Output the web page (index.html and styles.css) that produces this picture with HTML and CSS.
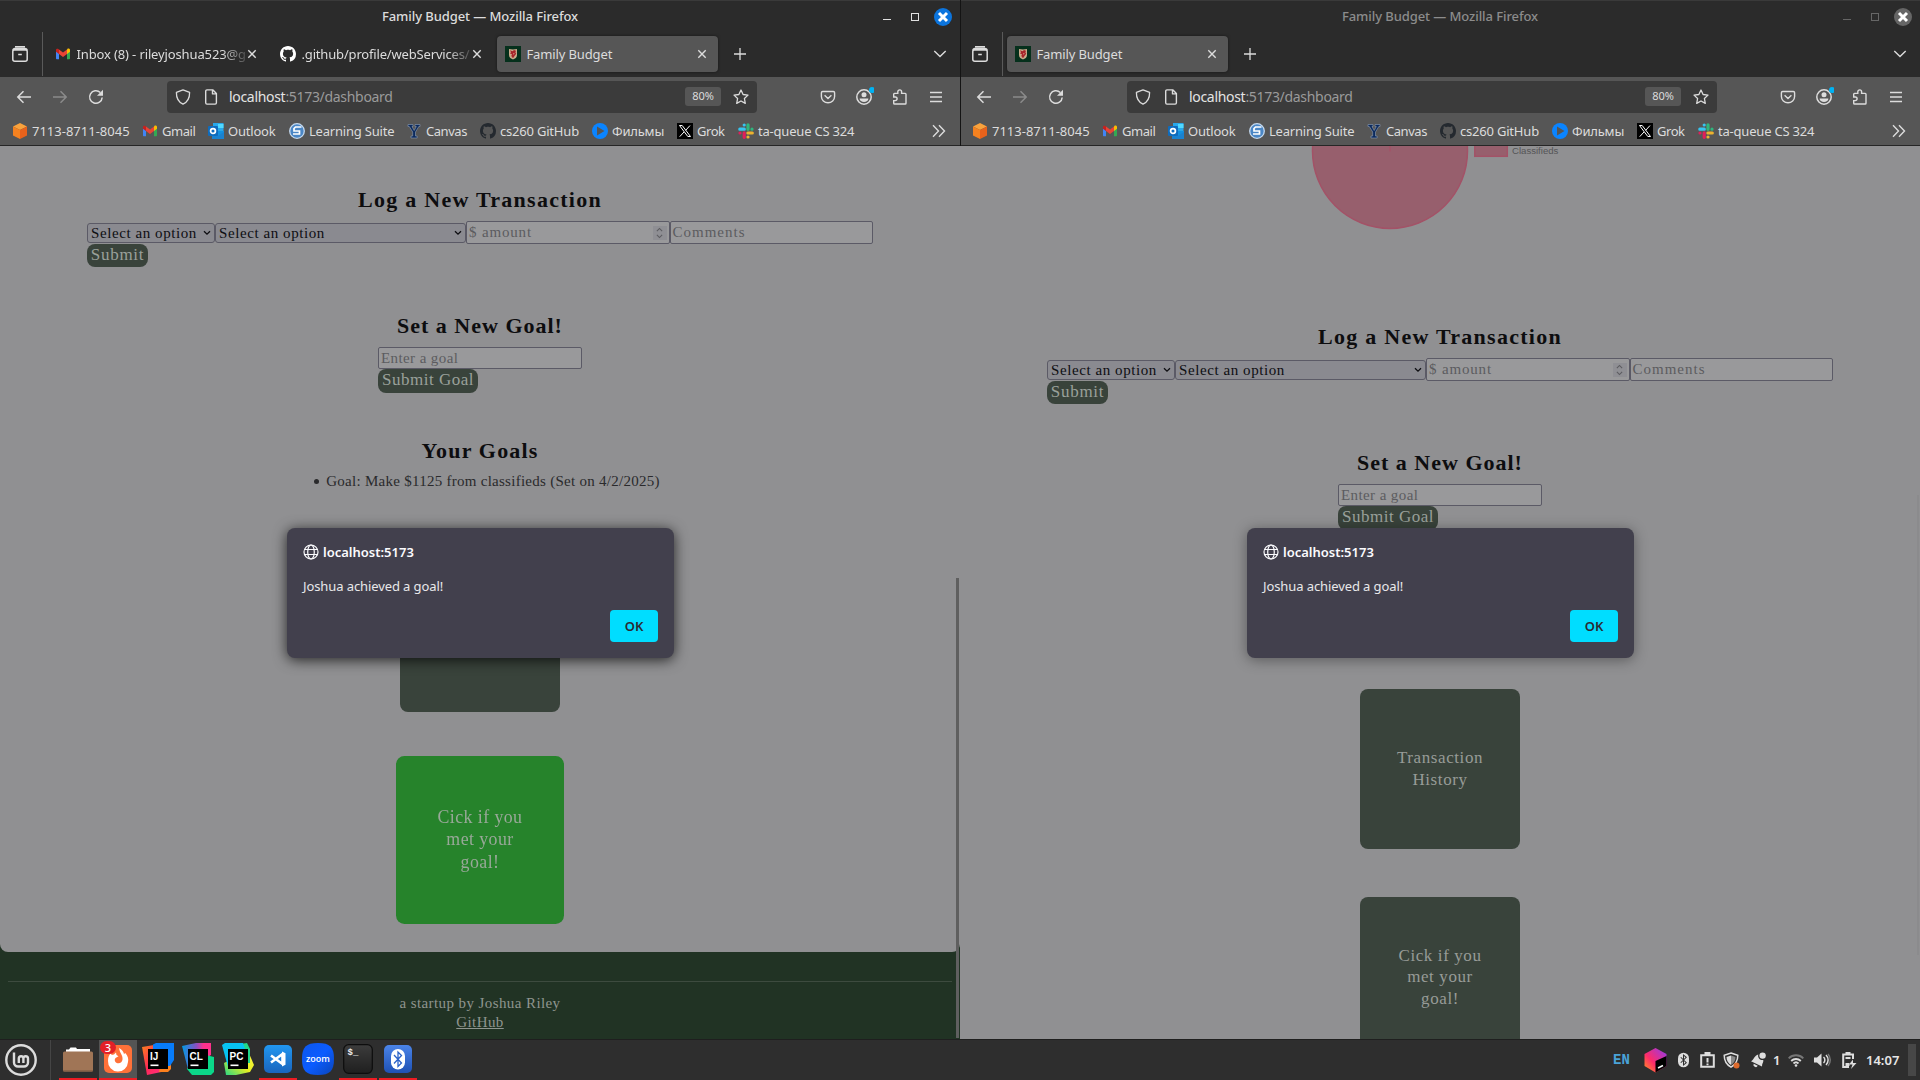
FILE: index.html
```html
<!DOCTYPE html>
<html lang="en">
<head>
<meta charset="utf-8">
<title>Family Budget</title>
<link rel="stylesheet" href="styles.css">
</head>
<body>
<svg class="defs" width="0" height="0" aria-hidden="true">
  <linearGradient id="g-ij" x1="0" y1="0" x2="1" y2="1"><stop offset="0" stop-color="#fc801d"/><stop offset=".5" stop-color="#fe2857"/><stop offset="1" stop-color="#ff318c"/></linearGradient>
  <linearGradient id="g-cl" x1="0" y1="0" x2="1" y2="0"><stop offset="0" stop-color="#009ae5"/><stop offset=".5" stop-color="#8a4fc0"/><stop offset=".75" stop-color="#ff318c"/></linearGradient>
  <linearGradient id="g-pc" x1="0" y1="1" x2="1" y2="0"><stop offset="0" stop-color="#21d789"/><stop offset=".5" stop-color="#e8ee20"/><stop offset="1" stop-color="#fcf84a"/></linearGradient>
  <linearGradient id="g-blue" x1="0" y1="0" x2="0" y2="1"><stop offset="0" stop-color="#2196f0"/><stop offset="1" stop-color="#1a65bd"/></linearGradient>
  <linearGradient id="g-bt" x1="0" y1="0" x2="0" y2="1"><stop offset="0" stop-color="#4b84e8"/><stop offset="1" stop-color="#1e51b4"/></linearGradient>
  <linearGradient id="g-term" x1="0" y1="0" x2="0" y2="1"><stop offset="0" stop-color="#3c3c3c"/><stop offset="1" stop-color="#1f1f1f"/></linearGradient>
  <linearGradient id="g-cube" x1="0" y1="1" x2="1" y2="0"><stop offset="0" stop-color="#ff9a1d"/><stop offset=".4" stop-color="#fe2b6a"/><stop offset="1" stop-color="#8f3bf0"/></linearGradient>
  <linearGradient id="g-zoom" x1="0" y1="0" x2="1" y2="1"><stop offset="0" stop-color="#0d57ee"/><stop offset=".5" stop-color="#0b5cff"/><stop offset="1" stop-color="#0a45b8"/></linearGradient>
  <symbol id="view" viewBox="0 0 16 16"><path d="M3 .8h10M2.2 4h11.6a1.4 1.4 0 0 1 1.4 1.4v7.800a2 2 0 0 1-2 2H2.800a2 2 0 0 1-2-2V5.400A1.400 1.400 0 0 1 2.200 4zM.8 4.500C1 3 2 2.500 3 2.500h10c1 0 2 .5 2.200 2M6.200 8.500h3.600" fill="none" stroke="currentColor" stroke-width="1.500"/></symbol>
  <symbol id="gmail" viewBox="0 0 16 16"><path d="M1 4v8.300c0 .6.4 1 1 1h2V6z" fill="#4285f4"/><path d="M15 4v8.300c0 .6-.4 1-1 1h-2V6z" fill="#34a853"/><path d="M12 3.500V8l3-2.200V4c0-1.500-1.600-1.900-2.500-1.200z" fill="#fbbc04"/><path d="M4 8V3.500l4 3 4-3V8l-4 3z" fill="#ea4335"/><path d="M1 4v1.800L4 8V3.500l-.6-.5C2.500 2.200 1 2.800 1 4z" fill="#c5221f"/></symbol>
  <symbol id="github" viewBox="0 0 16 16"><path fill="currentColor" d="M8 0C3.58 0 0 3.58 0 8c0 3.54 2.29 6.53 5.47 7.59.4.07.55-.17.55-.38 0-.19-.01-.82-.01-1.49-2.01.37-2.53-.49-2.69-.94-.09-.23-.48-.94-.82-1.13-.28-.15-.68-.52-.01-.53.63-.01 1.08.58 1.23.82.72 1.21 1.87.87 2.33.66.07-.52.28-.87.51-1.07-1.78-.2-3.64-.89-3.64-3.95 0-.87.31-1.59.82-2.15-.08-.2-.36-1.02.08-2.12 0 0 .67-.21 2.2.82.64-.18 1.32-.27 2-.27s1.36.09 2 .27c1.53-1.04 2.2-.82 2.2-.82.44 1.1.16 1.92.08 2.12.51.56.82 1.27.82 2.15 0 3.07-1.87 3.75-3.65 3.95.29.25.54.73.54 1.48 0 1.07-.01 1.93-.01 2.2 0 .21.15.46.55.38A8.01 8.01 0 0 0 16 8c0-4.42-3.58-8-8-8z"/></symbol>
  <symbol id="crest" viewBox="0 0 16 16"><path fill="#06301c" d="M0 0h16v16H0z"/><path fill="#c9a98a" d="M4 3l4 .6L12 3v6c0 2.500-2 3.700-4 4.500C6 12.700 4 11.500 4 9z"/><path fill="#a8242a" d="M5 4.200l2.500 1L9 3.900l2 .8-.6 1.800.8 1.300L9.500 10 8 12.200 6.300 10 7 8.200 5 7.500l1-1.200z"/><path fill="#e8d9c0" d="M8.500 7l1 .6-1 1.200z"/></symbol>
  <symbol id="close" viewBox="0 0 16 16"><path d="M4.300 4.300l7.400 7.400M11.700 4.300l-7.400 7.400" stroke="currentColor" stroke-width="1.400" fill="none"/></symbol>
  <symbol id="plus" viewBox="0 0 16 16"><path d="M8 2v12M2 8h12" stroke="currentColor" stroke-width="1.300" fill="none"/></symbol>
  <symbol id="chev" viewBox="0 0 16 16"><path d="M2.300 5l5.700 5.500L13.700 5" stroke="currentColor" stroke-width="1.400" fill="none"/></symbol>
  <symbol id="back" viewBox="0 0 16 16"><path d="M15 8H1.800M7.500 2.300L1.800 8l5.700 5.700" stroke="currentColor" stroke-width="1.500" fill="none"/></symbol>
  <symbol id="fwd" viewBox="0 0 16 16"><path d="M1 8h13.200M8.500 2.300L14.200 8l-5.700 5.700" stroke="currentColor" stroke-width="1.500" fill="none"/></symbol>
  <symbol id="reload" viewBox="0 0 16 16"><path d="M14.200 8.500A6.300 6.300 0 1 1 12.300 3.500" stroke="currentColor" stroke-width="1.500" fill="none"/><path d="M15 .8v6H9z" fill="currentColor"/></symbol>
  <symbol id="shield" viewBox="0 0 16 16"><path d="M8 .9l6.600 2.500c.1 4.800-1.500 9.200-6.600 11.800C2.900 12.600 1.300 8.200 1.400 3.400z" stroke="currentColor" stroke-width="1.300" stroke-linejoin="round" fill="none"/></symbol>
  <symbol id="page" viewBox="0 0 16 16"><path d="M2.700 2.200c0-.8.5-1.300 1.300-1.300h6l3.400 3.500v9.400c0 .8-.5 1.300-1.300 1.300H4c-.8 0-1.300-.5-1.300-1.300zM9.500 1v3.900h3.800" stroke="currentColor" stroke-width="1.400" stroke-linejoin="round" fill="none"/></symbol>
  <symbol id="star" viewBox="0 0 16 16"><path d="M8 1l2.100 4.500 4.900.6-3.600 3.400.9 4.900L8 12l-4.300 2.400.9-4.900L1 6.100l4.900-.6z" stroke="currentColor" stroke-width="1.300" stroke-linejoin="round" fill="none"/></symbol>
  <symbol id="pocket" viewBox="0 0 16 16"><path d="M2.700 2.500h10.600c.7 0 1.300.5 1.300 1.200V7.500a6.600 6.300 0 0 1-13.200 0V3.700c0-.7.6-1.200 1.300-1.200zM4.600 6.300L8 9.500l3.400-3.200" stroke="currentColor" stroke-width="1.400" fill="none"/></symbol>
  <symbol id="account" viewBox="0 0 18 18"><circle cx="8" cy="10" r="7.200" stroke="currentColor" stroke-width="1.500" fill="none"/><circle cx="8" cy="7.800" r="2.500" fill="currentColor"/><path d="M3.600 11.500h8.800c0 2-2 3.500-4.400 3.500s-4.400-1.500-4.400-3.500z" fill="currentColor"/><circle cx="16" cy="3" r="3" fill="#00b3f4"/></symbol>
  <symbol id="ext" viewBox="0 0 16 16"><path d="M1.700 8V5.200c0-.5.300-.8.800-.8h3.300V2.800a1.900 1.900 0 0 1 3.800 0v1.600h3.600c.5 0 .8.300.8.800v9c0 .5-.3.8-.8.8H2.500c-.5 0-.8-.3-.8-.8v-2.600h1.600a1.800 1.800 0 0 0 0-3.600z" stroke="currentColor" stroke-width="1.400" fill="none"/></symbol>
  <symbol id="menu" viewBox="0 0 16 16"><path d="M2 3.500h12M2 8h12M2 12.500h12" stroke="currentColor" stroke-width="1.300"/></symbol>
  <symbol id="more" viewBox="0 0 16 16"><path d="M2 2.300L7.500 8 2 13.700M8 2.300L13.500 8 8 13.700" stroke="currentColor" stroke-width="1.400" fill="none"/></symbol>
  <symbol id="aws" viewBox="0 0 16 16"><path d="M8 0l7 3.500L8 7 1 3.500z" fill="#f9a23c"/><path d="M1 3.500L8 7v9l-7-3.500z" fill="#f58220"/><path d="M15 3.500L8 7v9l7-3.500z" fill="#e8621c"/></symbol>
  <symbol id="outlook" viewBox="0 0 16 16"><path d="M5 0h10.500v8H5z" fill="#28a8ea"/><path d="M10 1h5.500v4H10z" fill="#50d9ff"/><path d="M4 8l12 0v8H4z" fill="#1490df"/><path d="M4 9l6.500 3.500L16 9v7H4z" fill="#1a82d0"/><rect y="3" width="10" height="10" rx="1" fill="#0f6cbd"/><circle cx="5" cy="8" r="2.400" fill="none" stroke="#fff" stroke-width="1.700"/></symbol>
  <symbol id="ls" viewBox="0 0 16 16"><circle cx="8" cy="8" r="7.300" fill="#4a86c5" stroke="#c5d9ee" stroke-width="1.300"/><path d="M12.500 4H6.500L5 5.500V8h5.500v3H4" stroke="#fff" stroke-width="1.700" fill="none"/></symbol>
  <symbol id="byu" viewBox="0 0 16 16"><path d="M2 1.500h5v2H6l2.200 4 2.100-4H9v-2h5v2h-1.200L9.500 9v4h1.700v2H5v-2h1.700V9L3.300 3.500H2z" fill="#0b2a5e" stroke="#8d9db5" stroke-width=".6"/></symbol>
  <symbol id="film" viewBox="0 0 16 16"><circle cx="8" cy="8" r="8" fill="#0a84ff"/><path d="M5 3.500L12.500 8 5 12.500z" fill="#565656"/></symbol>
  <symbol id="x" viewBox="0 0 16 16"><path d="M0 0h16v16H0z"/><path d="M2.500 2.500h2.700l8.300 11h-2.700zM13 2.500L8.700 7.300M7 9l-4.300 4.700" fill="none" stroke="#fff" stroke-width="1"/></symbol>
  <symbol id="slack" viewBox="0 0 16 16"><g fill="none" stroke-width="3.200" stroke-linecap="round"><path d="M6.200 2v0M1.800 6.200h4.500" stroke="#36c5f0"/><path d="M14 6.200v0M10 1.800v4.500" stroke="#2eb67d"/><path d="M10 14v0M9.900 10h4.400" stroke="#ecb22e"/><path d="M2 10v0M6.200 9.900v4.400" stroke="#e01e5a"/></g></symbol>
  <symbol id="globe" viewBox="0 0 16 16"><g fill="none" stroke="currentColor" stroke-width="1.200"><circle cx="8" cy="8" r="7"/><ellipse cx="8" cy="8" rx="3.300" ry="7"/><path d="M1.500 5.500h13M1.500 10.500h13"/></g></symbol>
  <symbol id="caret" viewBox="0 0 8 8"><path d="M1 2.200L4 5.200 7 2.200" stroke="currentColor" stroke-width="1.300" fill="none"/></symbol>
  <symbol id="bt" viewBox="0 0 12 16"><rect width="12" height="16" rx="6" fill="var(--pill)"/><path d="M3 5l6 6-3 2.500v-11L9 5l-6 6" fill="none" stroke="var(--rune)" stroke-width="1.100"/></symbol>
</svg>

<div class="desktop">
  <section class="window">
    <header class="titlebar">
      <span class="wtitle">Family Budget — Mozilla Firefox</span>
      <span class="wmin"></span><span class="wmax"></span>
      <span class="wclose"><svg width="18" height="18"><path d="M5 5l8 8M13 5l-8 8" stroke="#fff" stroke-width="3"/></svg></span>
    </header>
    <nav class="tabs">
      <span class="viewbtn"><svg class="i16"><use href="#view"/></svg></span>
      <div class="tab"><svg class="i16"><use href="#gmail"/></svg><span class="tlabel fade">Inbox (8) - rileyjoshua523@g</span><svg class="i16"><use href="#close"/></svg></div>
      <div class="tab"><svg class="i16 white"><use href="#github"/></svg><span class="tlabel fade gh">.github/profile/webServices/</span><svg class="i16"><use href="#close"/></svg></div>
      <div class="tab active"><svg class="i16"><use href="#crest"/></svg><span class="tlabel">Family Budget</span><svg class="i16"><use href="#close"/></svg></div>
      <svg class="i16 newtab"><use href="#plus"/></svg>
      <svg class="i16 alltabs"><use href="#chev"/></svg>
    </nav>
    <div class="toolbar">
      <svg class="i16"><use href="#back"/></svg><svg class="i16 dim"><use href="#fwd"/></svg><svg class="i16"><use href="#reload"/></svg>
      <div class="urlbar"><svg class="i16"><use href="#shield"/></svg><svg class="i16"><use href="#page"/></svg><span class="url"><b>localhost</b>:5173/dashboard</span><span class="zoomlevel">80%</span><svg class="i16"><use href="#star"/></svg></div>
      <div class="tools"><svg class="i16"><use href="#pocket"/></svg><svg class="acct"><use href="#account"/></svg><svg class="i16"><use href="#ext"/></svg><svg class="i16"><use href="#menu"/></svg></div>
    </div>
    <div class="bookmarks">
      <span class="acctno"><svg class="i16"><use href="#aws"/></svg>7113-8711-8045</span>
      <span class="tight"><svg class="i16"><use href="#gmail"/></svg>Gmail</span>
      <span><svg class="i16"><use href="#outlook"/></svg>Outlook</span>
      <span><svg class="i16"><use href="#ls"/></svg>Learning Suite</span>
      <span class="tight"><svg class="i16"><use href="#byu"/></svg>Canvas</span>
      <span><svg class="i16 ink"><use href="#github"/></svg>cs260 GitHub</span>
      <span><svg class="i16"><use href="#film"/></svg>Фильмы</span>
      <span class="tight"><svg class="i16"><use href="#x"/></svg>Grok</span>
      <span><svg class="i16"><use href="#slack"/></svg>ta-queue CS 324</span>
      <svg class="i16 overflow"><use href="#more"/></svg>
    </div>
    <div class="page">
      <main class="content rounded">
        <h2 class="log-title">Log a New Transaction</h2>
        <div class="form">
          <div class="row">
            <span class="select type">Select an option<svg><use href="#caret"/></svg></span>
            <span class="select category">Select an option<svg><use href="#caret"/></svg></span>
            <span class="field"><em class="amount">$ amount</em><i class="spin"><svg class="up"><use href="#caret"/></svg><svg><use href="#caret"/></svg></i></span>
            <span class="field"><em class="comments">Comments</em></span>
          </div>
          <span class="btn">Submit</span>
        </div>
        <h2 class="goal-title">Set a New Goal!</h2>
        <div class="goalform"><span class="field"><em>Enter a goal</em></span><span class="btn wide">Submit Goal</span></div>
        <h2 class="list-title">Your Goals</h2>
        <ul class="goals"><li>Goal: Make $1125 from classifieds (Set on 4/2/2025)</li></ul>
        <div class="tile">Transaction<br>History</div>
        <div class="tile met">Cick if you<br>met your<br>goal!</div>
      </main>
      <footer class="foot"><hr><p>a startup by Joshua Riley</p><a>GitHub</a></footer>
    </div>
    <i class="scroll"></i>
    <div class="dialog">
      <div class="host"><svg class="i16"><use href="#globe"/></svg>localhost:5173</div>
      <p class="msg">Joshua achieved a goal!</p>
      <span class="ok">OK</span>
    </div>
  </section>

  <section class="window second">
    <header class="titlebar">
      <span class="wtitle">Family Budget — Mozilla Firefox</span>
      <span class="wmin"></span><span class="wmax"></span>
      <span class="wclose"><svg width="18" height="18"><path d="M5 5l8 8M13 5l-8 8" stroke="#fff" stroke-width="3"/></svg></span>
    </header>
    <nav class="tabs">
      <span class="viewbtn"><svg class="i16"><use href="#view"/></svg></span>
      <div class="tab active"><svg class="i16"><use href="#crest"/></svg><span class="tlabel">Family Budget</span><svg class="i16"><use href="#close"/></svg></div>
      <svg class="i16 newtab"><use href="#plus"/></svg>
      <svg class="i16 alltabs"><use href="#chev"/></svg>
    </nav>
    <div class="toolbar">
      <svg class="i16"><use href="#back"/></svg><svg class="i16 dim"><use href="#fwd"/></svg><svg class="i16"><use href="#reload"/></svg>
      <div class="urlbar"><svg class="i16"><use href="#shield"/></svg><svg class="i16"><use href="#page"/></svg><span class="url"><b>localhost</b>:5173/dashboard</span><span class="zoomlevel">80%</span><svg class="i16"><use href="#star"/></svg></div>
      <div class="tools"><svg class="i16"><use href="#pocket"/></svg><svg class="acct"><use href="#account"/></svg><svg class="i16"><use href="#ext"/></svg><svg class="i16"><use href="#menu"/></svg></div>
    </div>
    <div class="bookmarks">
      <span class="acctno"><svg class="i16"><use href="#aws"/></svg>7113-8711-8045</span>
      <span class="tight"><svg class="i16"><use href="#gmail"/></svg>Gmail</span>
      <span><svg class="i16"><use href="#outlook"/></svg>Outlook</span>
      <span><svg class="i16"><use href="#ls"/></svg>Learning Suite</span>
      <span class="tight"><svg class="i16"><use href="#byu"/></svg>Canvas</span>
      <span><svg class="i16 ink"><use href="#github"/></svg>cs260 GitHub</span>
      <span><svg class="i16"><use href="#film"/></svg>Фильмы</span>
      <span class="tight"><svg class="i16"><use href="#x"/></svg>Grok</span>
      <span><svg class="i16"><use href="#slack"/></svg>ta-queue CS 324</span>
      <svg class="i16 overflow"><use href="#more"/></svg>
    </div>
    <div class="page">
      <main class="content">
        <svg class="chart" width="260" height="100" viewBox="0 0 260 100">
          <circle cx="79" cy="5" r="77.500" fill="#975f6d" stroke="#a35267" stroke-width="1.500"/>
          <path d="M79 0v5.500" stroke="#a35267" stroke-width="1.500"/>
          <rect x="163.800" y="-4" width="32.500" height="14.300" fill="#975f6d" stroke="#a35267" stroke-width="1.500"/>
          <text x="201" y="8" class="legend">Classifieds</text>
        </svg>
        <h2 class="log-title">Log a New Transaction</h2>
        <div class="form">
          <div class="row">
            <span class="select type">Select an option<svg><use href="#caret"/></svg></span>
            <span class="select category">Select an option<svg><use href="#caret"/></svg></span>
            <span class="field"><em class="amount">$ amount</em><i class="spin"><svg class="up"><use href="#caret"/></svg><svg><use href="#caret"/></svg></i></span>
            <span class="field"><em class="comments">Comments</em></span>
          </div>
          <span class="btn">Submit</span>
        </div>
        <h2 class="goal-title">Set a New Goal!</h2>
        <div class="goalform"><span class="field"><em>Enter a goal</em></span><span class="btn wide">Submit Goal</span></div>
        <div class="tile first">Transaction<br>History</div>
        <div class="tile">Cick if you<br>met your<br>goal!</div>
      </main>
    </div>
    <i class="scroll"></i>
    <div class="dialog">
      <div class="host"><svg class="i16"><use href="#globe"/></svg>localhost:5173</div>
      <p class="msg">Joshua achieved a goal!</p>
      <span class="ok">OK</span>
    </div>
  </section>

  <div class="taskbar">
    <svg class="mint" width="32" height="32" viewBox="0 0 32 32"><g fill="none" stroke="#dcdcdc"><circle cx="16" cy="16" r="14.700" stroke-width="2.400"/><path d="M9 8.500v10a4 4 0 0 0 4 4h6a4 4 0 0 0 4-4v-4a2.300 2.300 0 0 0-4.600 0v4.500M18.400 18v-3.500a2.300 2.300 0 0 0-4.600 0v4.500" stroke-width="2.400"/></g></svg>
    <div class="apps">
      <span class="app run"><svg width="32" height="32" viewBox="0 0 32 32"><path d="M4 9V6.500h3l1.500-2H14l1 1.500h13V10H4z" fill="#fff"/><rect x="1" y="8.500" width="30" height="20" rx="1.500" fill="#a07556"/><path d="M1 27h30v.5a1 1 0 0 1-1 1H2a1 1 0 0 1-1-1z" fill="#8c6448"/></svg></span>
      <span class="app run focus"><svg width="32" height="32" viewBox="0 0 32 32"><rect x="2" y="2" width="28" height="28" rx="5" fill="#ff7139"/><path d="M17 5c3 1.500 4.500 3.500 5 6l1.300-1C26 13 26.700 16 26 19a10 10 0 0 1-20-1c0-4 1-6 3-8l.6 2 2.400-.4 2-2.200.5 2.700 2 1.200-3 1.700c-1.300 1.200-1 4 1.200 5 3 1 5.500-.5 5.800-3.500C21 12 18 11 17 5z" fill="#fff"/></svg><b class="badge">3</b></span>
      <span class="app"><svg width="32" height="32" viewBox="0 0 32 32"><path d="M0 4l12-2 12 26-19 4z" fill="url(#g-ij)"/><path d="M20 14h9v12l-3 3h-9z" fill="#fc801d"/><path d="M11 1.500L14 0h18v17l-4 6H11z" fill="#087cfa"/><path d="M6 6h20v20H6z"/><text x="8" y="17" class="jb">IJ</text><path d="M8.500 21.500h8v1.600h-8z" fill="#fff"/></svg></span>
      <span class="app"><svg width="32" height="32" viewBox="0 0 32 32"><path d="M0 3l14-3h15v12L6 26z" fill="url(#g-cl)"/><path d="M16 10l16 4v15l-3 3H10l-5-6z" fill="#0bd789"/><path d="M6 6h20v20H6z"/><text x="7.500" y="17" class="jb">CL</text><path d="M8.500 21.500h8v1.600h-8z" fill="#fff"/></svg></span>
      <span class="app"><svg width="32" height="32" viewBox="0 0 32 32"><path d="M2 20L26 8l6 14-4 7-14 3H4z" fill="url(#g-pc)"/><path d="M18 1l7-1 3 6v14H18z" fill="#21d789"/><path d="M0 2l3-2h18l2 6-17 18z" fill="#07c3f2"/><path d="M6 6h20v20H6z"/><text x="7.500" y="17" class="jb">PC</text><path d="M8.500 21.500h8v1.600h-8z" fill="#fff"/></svg></span>
      <span class="app run"><svg width="32" height="32" viewBox="0 0 32 32"><rect x="2" y="2" width="28" height="28" rx="5" fill="url(#g-blue)"/><path d="M9 12.500l11.500 8.500V11L9 19.500" fill="none" stroke="#fff" stroke-width="2.600" stroke-linejoin="round"/><path d="M20 8.500l3.500 1.700v11.600L20 23.500z" fill="#fff"/></svg></span>
      <span class="app"><svg width="32" height="32" viewBox="0 0 32 32"><path d="M16 0c12 0 16 4 16 16s-4 16-16 16S0 28 0 16 4 0 16 0z" fill="url(#g-zoom)"/><text x="16" y="18.700" text-anchor="middle" class="zm">zoom</text></svg></span>
      <span class="app run"><svg width="32" height="32" viewBox="0 0 32 32"><rect x="1.700" y="1.700" width="28.600" height="28.600" rx="5" fill="url(#g-term)" stroke="#0d0d0d" stroke-width="1.200"/><text x="5.500" y="11.500" class="sh">$_</text></svg></span>
      <span class="app run"><svg width="32" height="32" viewBox="0 0 32 32"><rect x="2" y="2" width="28" height="28" rx="5" fill="url(#g-bt)"/><rect x="9" y="6" width="14" height="20.500" rx="7" fill="#fff"/><path d="M12 12l7.500 8-3.500 3.500V9l3.500 3.500L12 20.500" fill="none" stroke="#2a62c8" stroke-width="1.300"/></svg></span>
    </div>
    <div class="tray">
      <span class="lang">EN</span>
      <svg width="23" height="25" viewBox="0 0 23 25"><path d="M11.500 0L22.500 6v12l-11 6.500L.5 18V6z" fill="url(#g-cube)"/><path d="M11.500 13l11-5v10l-11 6.500z"/><path d="M14 20l5-2.500" stroke="#fff" stroke-width="1.500"/></svg>
      <svg class="btray" width="11" height="16"><use href="#bt"/></svg>
      <svg width="15" height="16" viewBox="0 0 15 16"><path d="M1.200 3.200h12.600v11.600H1.200z" fill="none" stroke="#dedede" stroke-width="2"/><path d="M4.500 0h6v4h-6zM6.500 6h2v4.500h-2zM6.500 11.500h2v1.700h-2z" fill="#dedede"/></svg>
      <svg width="17" height="17" viewBox="0 0 17 17"><path d="M8 1l6.800 2.200c0 5-1.600 9-6.800 12C2.800 12.200 1.200 8.200 1.200 3.200z" fill="none" stroke="#dedede" stroke-width="1.500"/><path d="M8 3.500v9.500c-3-2-4.500-4.500-4.500-8z" fill="#dedede"/><path d="M8 3.500v9.500c3-2 4.500-4.500 4.500-8z" fill="#8a8a8a"/><circle cx="13.500" cy="13.500" r="3" fill="#dd6a2c"/></svg>
      <svg width="15" height="16" viewBox="0 0 15 16"><path d="M0 9.200c2.500-.7 3.500-6 7.300-6.700a4.300 4.300 0 0 0 5 5.500c.4 2.500-1.500 3.500-1.300 6.500z" fill="#dedede"/><circle cx="11.600" cy="3.600" r="3.200" fill="#dedede"/><path d="M2.700 11.800l4 2a2.200 2.200 0 0 1-4-2z" fill="#dedede"/></svg>
      <span class="num">1</span>
      <svg width="16" height="14" viewBox="0 0 16 14"><g fill="none" stroke-width="1.900"><path d="M.7 5.300a10.300 10.300 0 0 1 14.600 0" stroke="#777"/><path d="M3.200 8a6.900 6.900 0 0 1 9.600 0M5.500 10.500a3.600 3.600 0 0 1 5 0" stroke="#dedede"/></g><circle cx="8" cy="12.500" r="1.300" fill="#dedede"/></svg>
      <svg width="17" height="14" viewBox="0 0 17 14"><path d="M0 4.500h3L7.500.5v13L3 9.500H0z" fill="#dedede"/><path d="M9.500 4a4 4 0 0 1 0 6M12 2a7 7 0 0 1 0 10" fill="none" stroke="#dedede" stroke-width="1.500"/><path d="M14 1a9 9 0 0 1 0 12" fill="none" stroke="#777" stroke-width="1.400"/></svg>
      <svg width="15" height="17" viewBox="0 0 15 17"><path d="M7 15H1.200V2.500H11V7" fill="none" stroke="#dedede" stroke-width="2"/><path d="M3.500 0h5v3h-5zM3.500 5h5v2h-5zM3.500 11h4v3h-4z" fill="#dedede"/><path d="M11 7.500l-4 5h3.500L9 17l5.500-6H11z" fill="#dedede"/></svg>
      <span class="clock">14:07</span>
      <i class="handle"></i>
    </div>
  </div>
</div>
</body>
</html>
```
FILE: styles.css
```css
* { box-sizing: border-box; }
body { margin: 0; overflow: hidden; background: #2e2e2e; font: 13px "Noto Sans", "Open Sans", sans-serif; color: #dcdcdc; }
svg { display: block; flex: none; overflow: visible; }
.defs { position: absolute; }
h2, p, ul { margin: 0; padding: 0; }
.i16 { width: 16px; height: 16px; }

.desktop { display: grid; grid-template: 1039px 41px / 960px 960px; width: 1920px; height: 1080px; }
.window { position: relative; display: grid; grid-template-columns: 960px; grid-template-rows: 32px 45px 41px 28px 1fr; overflow: hidden; }
.second::before { content: ""; position: absolute; left: 0; top: 0; width: 1px; height: 146px; background: #141414; }

/* window frame */
.titlebar { display: grid; grid-template-columns: 883px 8px 20px 8px 15px 18px; align-items: center; background: #2b2b2b; border-top: 1px solid #3a3a3a; }
.wtitle { padding: 0 0 2px 77px; text-align: center; font-weight: 500; letter-spacing: -.08px; white-space: nowrap; }
.wmin { height: 1px; background: #e0e0e0; margin-top: 5px; }
.wmax { grid-column: 4; width: 8px; height: 8px; border: 1px solid #e0e0e0; }
.wclose { grid-column: 6; width: 18px; height: 18px; border-radius: 50%; background: #0c75de; }
.second .wtitle { color: #8c8c8c; }
.second .wmin { background: #666; }
.second .wmax { border-color: #666; }
.second .wclose { background: #666; }

.tabs { display: flex; align-items: center; background: #2b2b2b; padding-bottom: 1px; }
.viewbtn { width: 43px; height: 44px; padding: 14px 0 0 12px; border-right: 1px solid #5a5a5a; margin-right: 4px; }
.tab { width: 221px; height: 36px; margin-right: 4px; padding: 0 8px; display: flex; align-items: center; border-radius: 4px; }
.tab.active { background: #565656; box-shadow: 0 0 3px rgba(0, 0, 0, .5); }
.tlabel { flex: none; width: 171px; margin-left: 5.500px; margin-right: -4px; letter-spacing: -.13px; overflow: hidden; white-space: nowrap; }
.fade { mask-image: linear-gradient(90deg, #000 145px, transparent 174px); }
.gh { letter-spacing: -.17px; }
.white { color: #fff; }
.newtab { margin-left: 10px; }
.alltabs { margin-left: auto; margin-right: 12px; }

.toolbar { display: flex; align-items: center; background: #565656; padding: 0 16px 2px; gap: 20px; }
.dim { color: #8b8b8b; }
.urlbar { display: flex; align-items: center; width: 590px; height: 32px; margin-left: 43px; padding: 0 8px; background: #3b3b3b; border-radius: 4px; }
.urlbar .i16 + .i16 { margin-left: 12px; }
.url { width: 456px; margin-left: 10px; padding-bottom: 1px; font-size: 14px; letter-spacing: -.31px; color: #9a9a9a; }
.url b { font-weight: 400; color: #e4e4e4; }
.zoomlevel { width: 36px; height: 19px; margin-right: 12px; border-radius: 3px; background: #565656; font-size: 11px; line-height: 18px; text-align: center; }
.tools { display: flex; align-items: center; gap: 20px; margin-left: 23px; padding-left: 20px; margin-left: 3px; padding-left: 20px; }
.acct { width: 18px; height: 18px; margin: -2px -2px 0 0; }
.tools { margin-left: 43px; padding-left: 0; }

.bookmarks { display: grid; grid-template-columns: 130px 66px 81px 117px 74px 112px 85px 61px 193px 16px; align-items: center; padding: 0 0 2px 11.500px; background: #565656; border-bottom: 1px solid #262626; letter-spacing: -.2px; }
.bookmarks span { display: flex; align-items: center; gap: 4.500px; white-space: nowrap; }
.bookmarks .acctno { letter-spacing: 0; }
.bookmarks .tight { letter-spacing: -.45px; }
.ink { color: #24292f; }
.overflow { margin-left: .5px; }

/* dashboard page */
.page { overflow: hidden; background: #213324; font: 15px "Liberation Serif", serif; color: #2a2a2c; }
.content { display: flex; flex-direction: column; align-items: center; background: #909092; }
.rounded { height: 806px; padding-top: 40px; border-radius: 0 0 8px 8px; }
.chart { margin-left: 2px; margin-bottom: 77px; }
.legend { font: 9.600px "Liberation Sans", sans-serif; fill: #555557; }
h2 { height: 28px; font: bold 22px/28px "Liberation Serif", serif; color: #0d0d0f; white-space: nowrap; }
.log-title { letter-spacing: 1.270px; }
.goal-title { margin-top: 45px; letter-spacing: 1px; }
.list-title { margin-top: 44px; letter-spacing: 1.170px; }
.form { width: 786px; margin-top: 7px; }
.row { display: flex; align-items: center; height: 23px; }
.select { display: flex; align-items: center; justify-content: space-between; height: 20px; padding: 0 3px; border: 1px solid #5b5a66; border-radius: 3px; background: #8a8a90; color: #0e0e12; letter-spacing: .58px; line-height: 18px; }
.select svg { width: 8px; height: 8px; }
.type { width: 128px; }
.category { width: 251px; }
.field { display: flex; align-items: center; justify-content: space-between; width: 203.500px; height: 23px; padding: 0 2px; border: 1px solid #5b5a66; border-radius: 2px; background: #99999b; color: #5c5c60; }
.goalform .field { height: 22px; }
.field em { font-style: normal; letter-spacing: .4px; }
.field .amount { letter-spacing: .84px; }
.field .comments { letter-spacing: 1px; }
.spin { width: 14px; height: 14px; background: #8f8f94; display: grid; justify-items: center; }
.spin svg { width: 7px; height: 7px; }
.up { transform: scaleY(-1); }
.btn { display: block; width: 61px; height: 23px; border-radius: 8px; background: #39433b; color: #99a09a; font-size: 17px; line-height: 22px; letter-spacing: .7px; text-align: center; }
.wide { width: 100px; height: 24px; letter-spacing: .5px; }
.goalform { width: 204px; margin-top: 7px; }
.goals { margin-top: 6px; margin-bottom: 61px; padding-left: 26px; height: 20px; line-height: 20px; letter-spacing: .27px; list-style: none; white-space: nowrap; }
.goals li::before { content: ""; display: inline-block; width: 5px; height: 5px; margin: 0 7px 2px -12px; border-radius: 50%; background: currentColor; }
.tile { flex: none; display: flex; align-items: center; justify-content: center; width: 160px; height: 160px; margin-bottom: 48px; border-radius: 8px; background: #39433b; color: #979b97; font-size: 17px; line-height: 21.600px; letter-spacing: .6px; text-align: center; }
.first { margin-top: 159px; }
.met { transform: scale(1.05); background: #26832b; color: #98a898; letter-spacing: .4px; }
.foot { text-align: center; color: #8f958f; line-height: 19px; letter-spacing: .41px; }
.foot hr { height: 1px; margin: 29px 8px 12px; border: 0; background: #3d4b3f; }
.foot a { text-decoration: underline; }
.scroll { position: absolute; right: 1px; top: 578px; width: 3px; height: 460px; background: #5f5f5f; }
.second .scroll { top: 495px; right: 1px; width: 2px; background: #8b8b8d; }

/* alert */
.dialog { position: absolute; left: 287px; top: 528px; width: 387px; height: 130px; padding: 16px; border-radius: 8px; background: #42404d; color: #e8e8ea; box-shadow: 0 2px 14px rgba(0, 0, 0, .75); display: grid; grid-template-rows: 16px 35px 32px; }
.second .dialog { box-shadow: 0 2px 14px rgba(0, 0, 0, .38); }
.host { display: flex; align-items: center; gap: 4px; font-weight: 600; color: #fbfbfe; }
.msg { padding-top: 17px; line-height: 18px; letter-spacing: -.1px; }
.ok { justify-self: end; width: 48px; height: 32px; margin-top: 15px; border-radius: 4px; background: #00ddff; color: #2b2a33; font-weight: 600; line-height: 32px; text-align: center; }

/* panel */
.taskbar { grid-column: 1 / 3; display: flex; background: #2e2e2e; border-top: 1px solid #1f1f1f; }
.mint { margin: 4px 13px 0 5px; }
.apps { display: flex; gap: 2px; padding-left: 8px; border-left: 1px solid #454545; }
.app { position: relative; width: 38px; padding: 3px 3px 0; }
.run { border-bottom: 2px solid #ee1c23; }
.focus { background: #545454; }
.badge { position: absolute; left: 1px; top: 1px; width: 16px; height: 13px; border-radius: 7px; background: #e32027; color: #fff; font-size: 11px; line-height: 13px; font-weight: 500; text-align: center; }
.jb { font: bold 10px "Liberation Sans", sans-serif; fill: #fff; }
.zm { font: 600 9px "Open Sans", sans-serif; fill: #fff; }
.sh { font: bold 9px "Liberation Mono", monospace; fill: #eee; }
.tray { display: grid; grid-template-columns: 31px 34px 22px 23px 28px 21px 16px 26px 28px 24px 42px 8px; align-items: center; margin-left: auto; margin-right: 4px; }
.lang { font: bold 14px "Liberation Mono", monospace; color: #4aa3d8; }
.btray { --pill: #dedede; --rune: #2e2e2e; }
.num, .clock { font-weight: 600; color: #e6e6e6; }
.num { padding-left: 1px; }
.handle { height: 32px; background: #474747; }
```
